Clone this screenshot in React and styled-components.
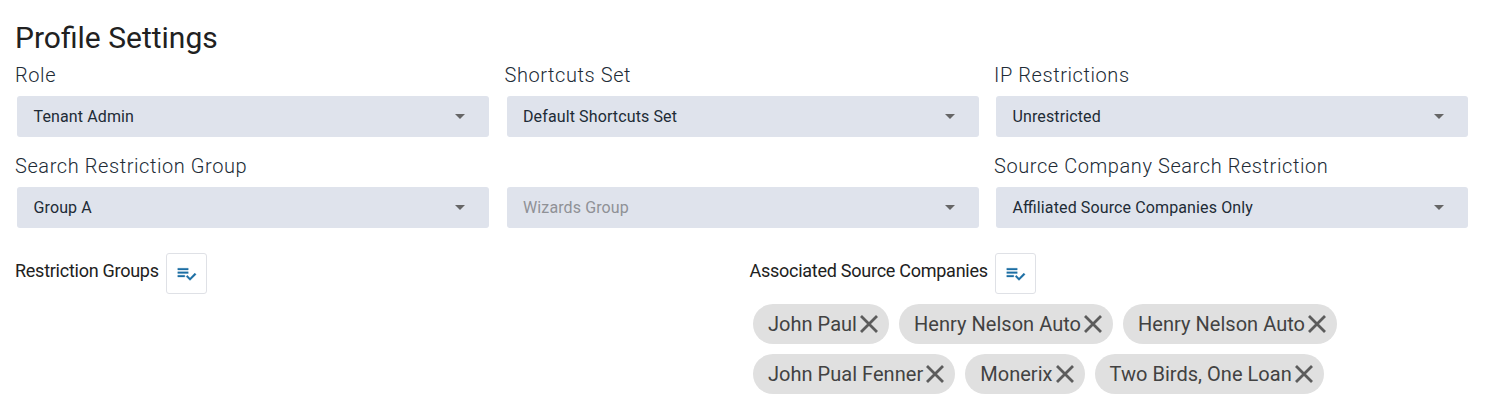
import styled, { createGlobalStyle } from 'styled-components';

const GlobalStyle = createGlobalStyle`
  * {
    box-sizing: border-box;
  }
  body {
    margin: 0;
    background: #fff;
    font-family: Roboto, 'Liberation Sans', sans-serif;
    color: #212121;
  }
`;

const Container = styled.main`
  width: 1492px;
  height: 408px;
  padding: 20px 22px 0 15px;
  overflow: hidden;
`;

const Title = styled.h1`
  margin: 0;
  font-size: 30px;
  font-weight: 400;
  line-height: 36px;
`;

const Fields = styled.div`
  display: grid;
  grid-template-columns: repeat(3, 489.5px);
  grid-auto-rows: 91px;
  padding-top: 5px;
`;

const Label = styled.label`
  display: block;
  height: 35px;
  color: #212b36;
  font-size: 20px;
  font-weight: 300;
  line-height: 28px;
  letter-spacing: 0.58px;
`;

const Select = styled.div`
  display: flex;
  align-items: center;
  justify-content: space-between;
  width: 472px;
  height: 41px;
  margin-left: 2px;
  padding: 0 24px 0 16.5px;
  border-radius: 3px;
  background: #dfe3ec;
  color: ${(props) => (props.$empty ? '#8f9196' : '#212b36')};
  font-size: 16px;
  letter-spacing: 0.12px;
  font-feature-settings: 'liga' 1;
`;

const Arrow = styled.span`
  border: 5.5px solid transparent;
  border-top: 5px solid #666;
  border-bottom: 0;
`;

const Groups = styled.div`
  display: grid;
  grid-template-columns: 734.5px 1fr;
  padding-top: 10px;
`;

const GroupHead = styled.div`
  display: flex;
  gap: 7px;
  height: 41px;
  font-size: 18px;
  line-height: 36px;
  letter-spacing: -0.26px;
`;

const EditButton = styled.button`
  display: flex;
  align-items: center;
  justify-content: center;
  width: 41.5px;
  height: 41px;
  padding: 0 0 1px;
  border: 1px solid #dfe1e6;
  border-radius: 3px;
  background: #fff;
  color: #1c6ea4;
`;

const Chips = styled.div`
  display: flex;
  flex-wrap: wrap;
  gap: 10px;
  width: 600px;
  padding: 10px 0 0 3.5px;
`;

const Chip = styled.div`
  display: flex;
  align-items: center;
  gap: 3px;
  height: 40px;
  padding: 0 11px 0 15px;
  border-radius: 20px;
  background: #e0e0e0;
  color: #424242;
  font-size: 20px;
  letter-spacing: 0.03px;
`;

const fields = [
  { label: 'Role', value: 'Tenant Admin' },
  { label: 'Shortcuts Set', value: 'Default Shortcuts Set' },
  { label: 'IP Restrictions', value: 'Unrestricted' },
  { label: 'Search Restriction Group', value: 'Group A' },
  { label: '', value: 'Wizards Group', empty: true },
  { label: 'Source Company Search Restriction', value: 'Affiliated Source Companies Only' },
];

const companies = [
  'John Paul',
  'Henry Nelson Auto',
  'Henry Nelson Auto',
  'John Pual Fenner',
  'Monerix',
  'Two Birds, One Loan',
];

function Group ({ title, children }) {
  return (
    <section>
      <GroupHead>
        <span>{title}</span>
        <EditButton aria-label={title}>
          <svg width='21' height='21' viewBox='0 0 24 24' fill='currentColor' stroke='currentColor' strokeWidth='0.3'>
            <path d='M14 10H2v2h12v-2zm0-4H2v2h12V6zM2 16h8v-2H2v2zm19.5-4.5L23 13l-6.99 7-4.51-4.5L13 14l3.01 3 5.49-5.5z' />
          </svg>
        </EditButton>
      </GroupHead>
      {children}
    </section>
  );
}

function App () {
  return (
    <>
      <GlobalStyle />
      <Container>
        <Title>Profile Settings</Title>
        <Fields>
          {fields.map((field) => (
            <div key={field.value}>
              <Label>{field.label}</Label>
              <Select $empty={field.empty}>
                {field.value}
                <Arrow />
              </Select>
            </div>
          ))}
        </Fields>
        <Groups>
          <Group title='Restriction Groups' />
          <Group title='Associated Source Companies'>
            <Chips>
              {companies.map((name, i) => (
                <Chip key={i}>
                  {name}
                  <svg width='18' height='18' viewBox='0 0 18 18' stroke='#5c5c5c' strokeWidth='2.8'>
                    <path d='M1 1l16 16M17 1L1 17' />
                  </svg>
                </Chip>
              ))}
            </Chips>
          </Group>
        </Groups>
      </Container>
    </>
  );
}

export default App;
